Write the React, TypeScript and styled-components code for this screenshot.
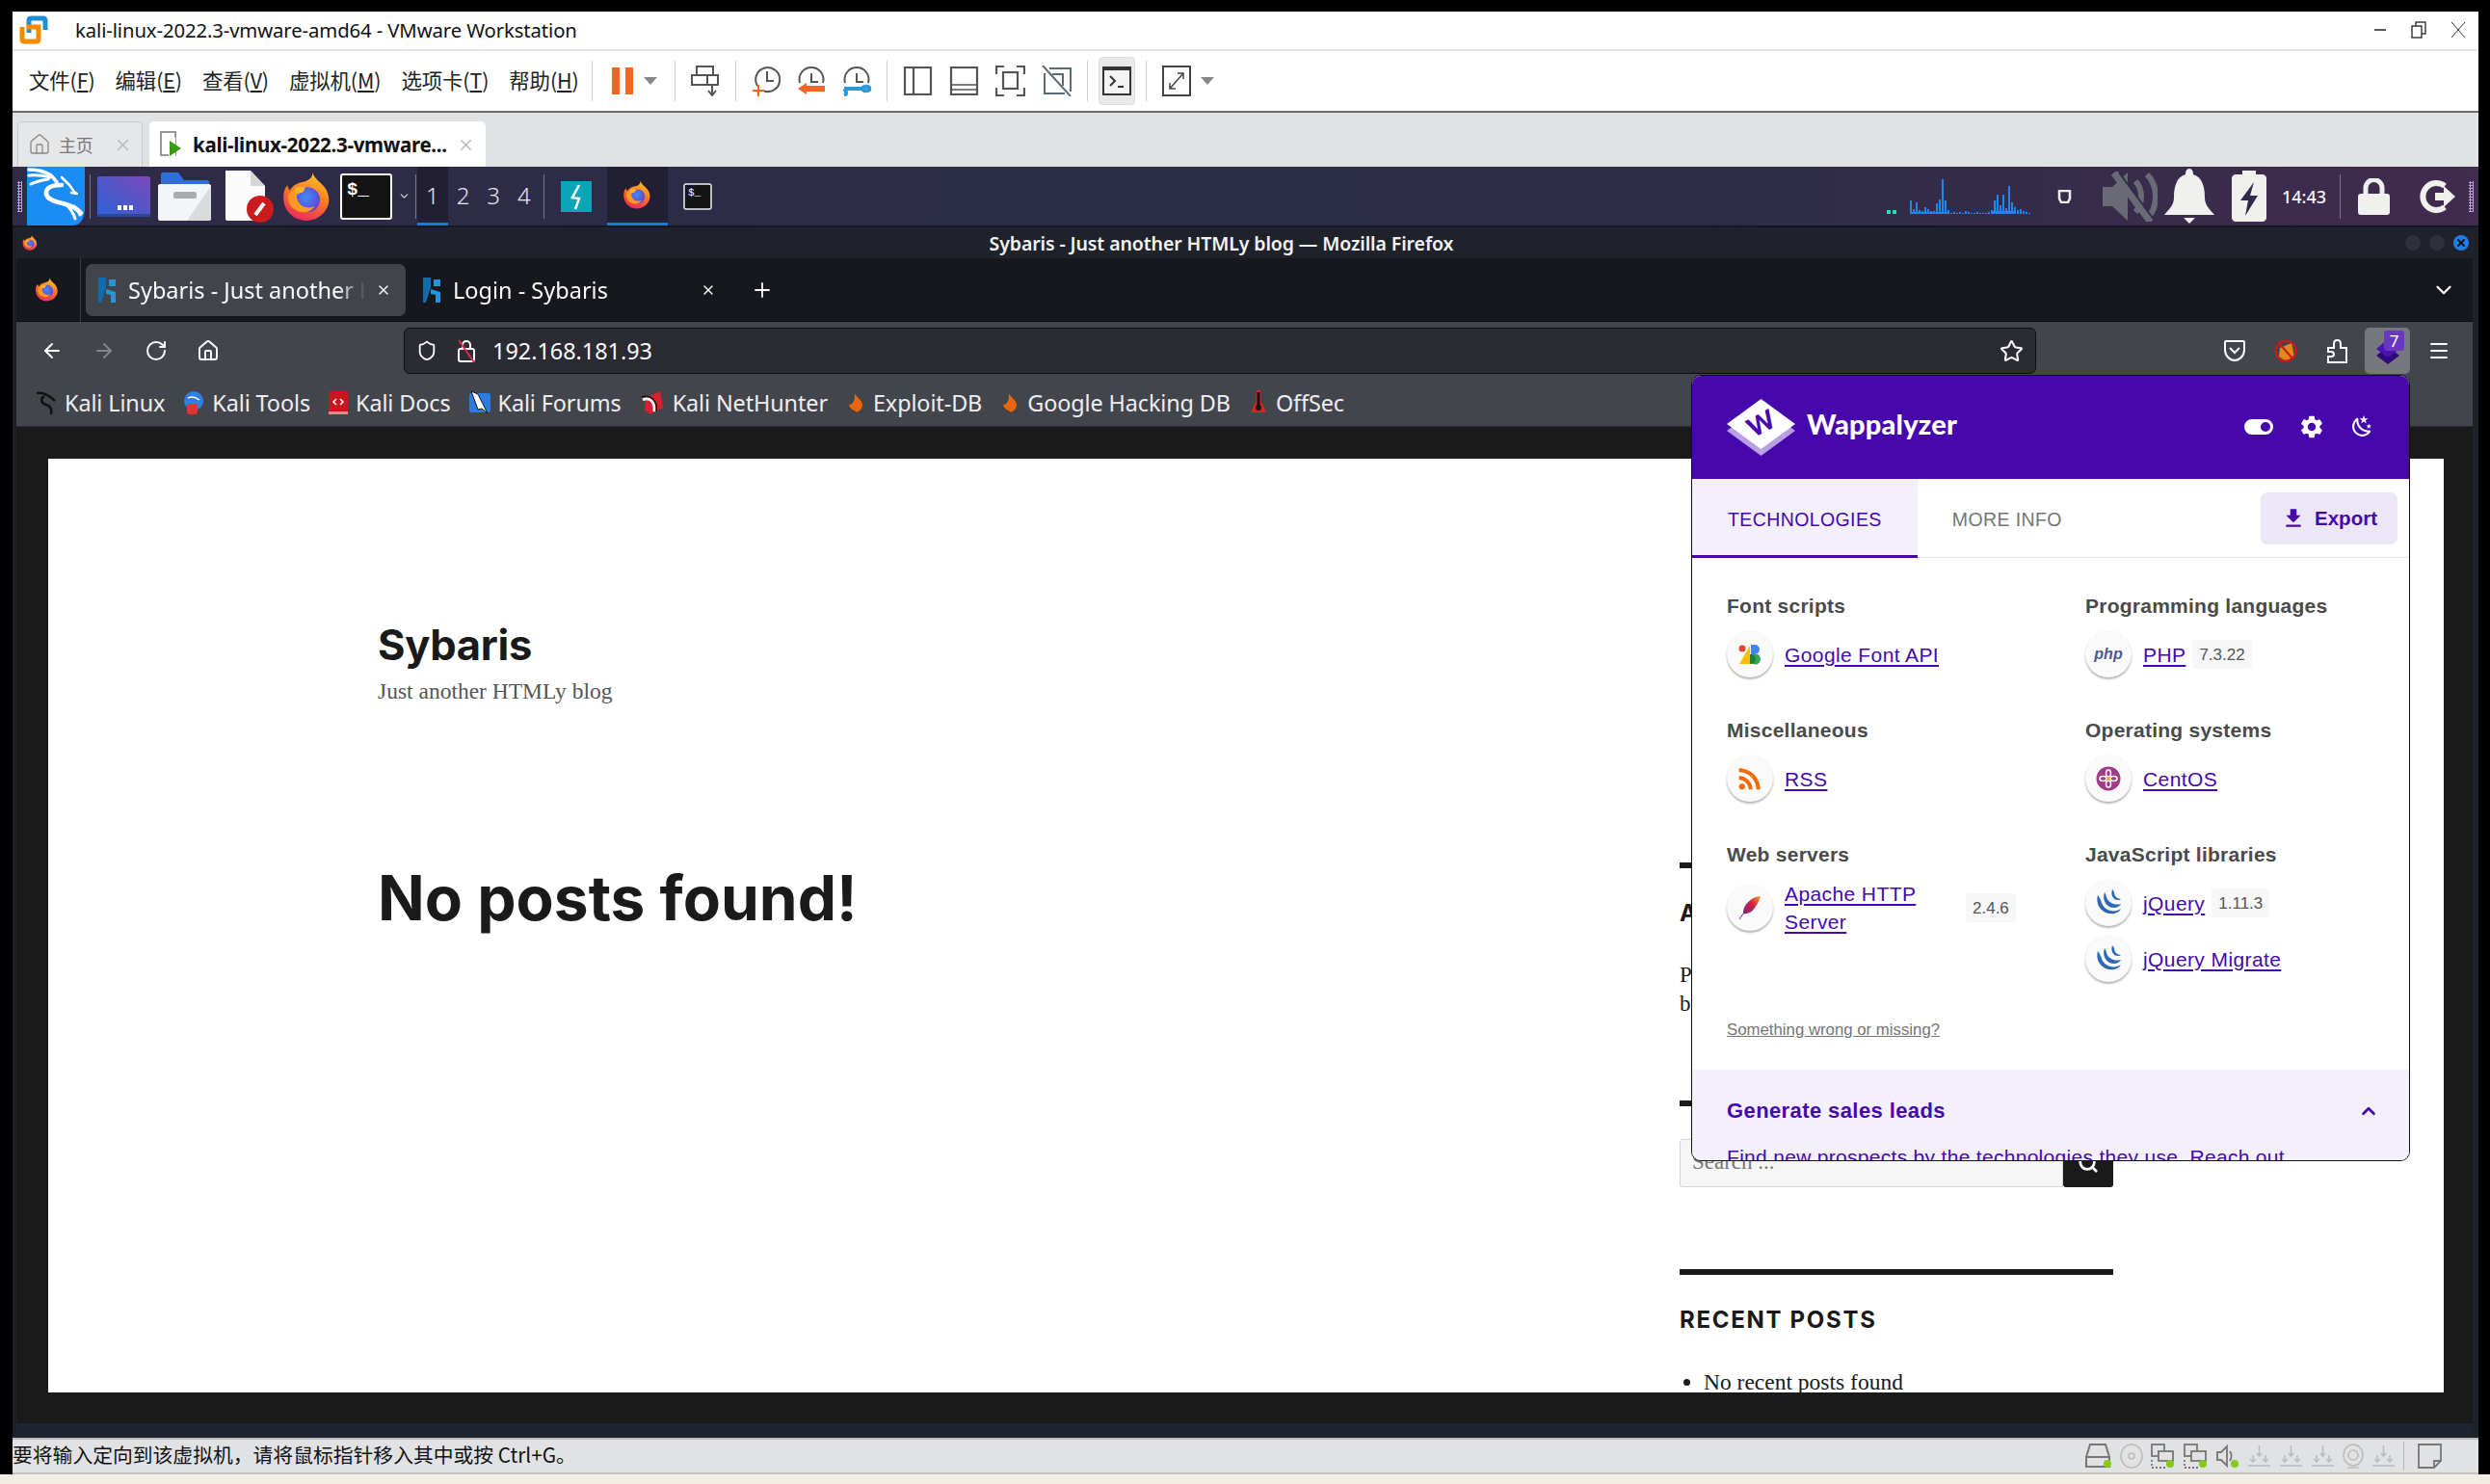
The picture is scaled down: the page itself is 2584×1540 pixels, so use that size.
import React from 'react';
import styled, { createGlobalStyle } from 'styled-components';
import { ArrowLeft, ArrowRight, RotateCw, Home, Shield, Star, Menu, Plus, X, ChevronDown, ChevronUp, Search } from 'lucide-react';
import { MdSettings, MdFileDownload, MdRssFeed } from 'react-icons/md';

const Global = createGlobalStyle`
  html, body { margin: 0; padding: 0; background: #000; }
  * { box-sizing: border-box; }
  a { color: inherit; }
`;

const Screen = styled.div`
  position: relative; width: 2584px; height: 1540px; background: #000; overflow: hidden;
  padding: 12px 12px 0 13px; display: flex; flex-direction: column;
  font-family: "Noto Sans", "Noto Sans CJK SC", sans-serif;
`;

/* ---------- VMware chrome ---------- */
const TitleBar = styled.div`
  height: 41px; flex: none; background: #fff; border-bottom: 2px solid #e6e6e6;
  display: flex; align-items: center; padding: 0 13px 2px 7px;
`;
const TitleText = styled.div`
  margin-left: 28px; font-size: 20.3px; letter-spacing: -0.1px; color: #111; flex: 1; white-space: nowrap;
`;
const WinButtons = styled.div`display: flex; align-items: center; gap: 25px;`;
const Toolbar = styled.div`
  height: 64px; flex: none; background: #fff; border-bottom: 2px solid #6b6b6b;
  display: flex; align-items: center; padding-left: 17px;
`;
const MenuList = styled.div`display: flex; gap: 21px; padding: 0 0 4px 0; width: 584px; flex: none;`;
const MenuItem = styled.span`
  font-family: "Noto Sans CJK SC", sans-serif; font-size: 21.4px; color: #222; white-space: nowrap;
  letter-spacing: -0.1px;
`;
const ToolGroup = styled.div`
  display: flex; align-items: center; gap: ${p => p.$gap ?? 17}px; height: 42px; padding: 0 ${p => p.$pad ?? 16}px;
  border-left: 1px solid #cfcfcf; flex: none;
`;
const ActiveTool = styled.div`
  width: 38px; height: 50px; margin: 0 -5px; background: #e9e9e9; border: 1px solid #dcdcdc; border-radius: 4px;
  display: flex; align-items: center; justify-content: center;
`;
const TabStrip = styled.div`
  height: 56px; flex: none; background: #e1e2e4; display: flex; align-items: flex-end; padding-left: 5px; gap: 7px;
`;
const VmTab = styled.div`
  height: 47px; width: ${p => p.$w}px; background: ${p => (p.$active ? '#fff' : '#e6e7e9')};
  border: 1px solid ${p => (p.$active ? '#fff' : '#c9cacc')}; border-bottom: 0; border-radius: 5px 5px 0 0;
  display: flex; align-items: center; padding: 0 10px; gap: 8px; white-space: nowrap;
`;
const VmTabLabel = styled.span`
  font-size: ${p => (p.$active ? 20.5 : 18)}px; font-weight: ${p => (p.$active ? 700 : 400)};
  color: ${p => (p.$active ? '#111' : '#777')}; flex: 1; letter-spacing: -0.3px;
  font-family: "Noto Sans", "Noto Sans CJK SC", sans-serif;
`;
const StatusBar = styled.div`
  height: 38px; flex: none; background: #e1e2e4; border-top: 2px solid #b9bcc0; border-bottom: 2px solid #c4c2bc;
  display: flex; align-items: center; justify-content: space-between; padding: 0 38px 0 0;
`;
const StatusText = styled.div`
  font-family: "Noto Sans CJK SC", sans-serif; font-size: 20.8px; color: #111; white-space: nowrap; padding-bottom: 4px;
`;
const StatusIcons = styled.div`display: flex; align-items: center; gap: 8px;`;
const StatusDivider = styled.div`width: 1px; height: 30px; background: #b5b5b5; margin: 0 6px 0 0;`;
const Beige = styled.div`height: 10px; flex: none; background: #f2eee6; margin: 0 -12px 0 -13px;`;

/* ---------- Kali panel ---------- */
const Panel = styled.div`
  height: 63px; flex: none; display: flex; align-items: center; padding: 0 5px; position: relative;
  background: linear-gradient(90deg, #2f2a47 0%, #2b2d48 45%, #2d2c48 70%, #412b4e 100%);
  border-bottom: 2px solid #16161e;
`;
const Grip = styled.div`
  width: 5px; height: 32px; flex: none;
  background-image: radial-gradient(#b9a2d6 1px, transparent 1.3px); background-size: 3px 3px;
`;
const PanelSep = styled.div`width: 1px; height: 46px; background: #77778a; flex: none;`;
const Workspace = styled.div`
  width: 31.7px; height: 61px; flex: none; display: flex; align-items: center; justify-content: center;
  font-size: 24px; font-weight: 300; color: #e8e8ee;
  background: ${p => (p.$active ? '#231f33' : 'transparent')};
  border-bottom: 3px solid ${p => (p.$active ? '#1f78e0' : 'transparent')};
`;
const TaskButton = styled.div`
  width: 63px; height: 61px; flex: none; display: flex; align-items: center; justify-content: center;
  background: #231f33; border-bottom: 3px solid #1f78e0;
`;
const Row = styled.div`display: flex; align-items: center; gap: ${p => p.$gap ?? 0}px; margin-left: ${p => p.$ml ?? 0}px; flex: none;`;
const Spacer = styled.div`flex: 1;`;
const Clock = styled.div`font-size: 18px; color: #f4f4f4; font-weight: 500; width: 54px; text-align: center;`;

/* ---------- Firefox ---------- */
const FirefoxWin = styled.div`
  flex: 1; min-height: 0; display: flex; flex-direction: column; background: #1f222b; padding: 0 6px 0 4px;
`;
const FfTitle = styled.div`
  height: 32px; flex: none; display: flex; align-items: center; margin: 0 -6px 0 -4px; padding: 0 10px;
  background: #1f222b;
`;
const FfTitleText = styled.div`
  flex: 1; text-align: center; color: #f3f3f3; font-weight: 600; font-size: 19.5px; letter-spacing: -0.1px;
`;
const WinDot = styled.span`
  width: 16px; height: 16px; border-radius: 50%; background: ${p => p.$c}; display: inline-flex;
  align-items: center; justify-content: center; flex: none;
`;
const TabBar = styled.div`
  height: 66px; flex: none; background: #17181d; display: flex; align-items: center; padding-left: 19px;
  color: #fbfbfe; border-bottom: 1px solid #0c0c0f;
`;
const TabSep = styled.div`width: 1px; height: 66px; background: #3a3b42; margin: 0 5px 0 22px;`;
const FfTab = styled.div`
  width: 332px; height: 54px; border-radius: 7px; background: ${p => (p.$active ? '#42444b' : 'transparent')};
  display: flex; align-items: center; padding: 0 ${p => (p.$active ? 15 : 10)}px 0 ${p => (p.$active ? 12 : 17)}px; gap: 10px;
`;
const FfTabLabel = styled.div`
  flex: 1; font-size: 23.5px; color: #fbfbfe; white-space: nowrap; overflow: hidden;
  mask-image: linear-gradient(90deg, #000 88%, transparent 100%);
`;
const NavBar = styled.div`
  height: 54px; flex: none; background: #43454c; display: flex; align-items: center; padding: 6px 0 0 25px; color: #fbfbfe;
`;
const NavIcons = styled.div`display: flex; align-items: center; gap: 30px; width: 377px; flex: none;`;
const UrlBar = styled.div`
  width: 1694px; height: 48px; flex: none; background: #2a2b33; border: 1px solid #0f0f12; border-radius: 6px;
  display: flex; align-items: center; padding: 0 12px 0 12px; gap: 16px;
`;
const UrlText = styled.div`font-size: 23.4px; color: #fbfbfe; flex: 1;`;
const NavRight = styled.div`flex: 1; display: flex; align-items: center; justify-content: flex-end; padding-right: 12px;`;
const NavTool = styled.div`
  position: relative; width: 47px; height: 48px; border-radius: 5px; flex: none; margin-left: 6px;
  background: ${p => (p.$active ? '#77787d' : 'transparent')}; display: flex; align-items: center; justify-content: center;
`;
const Badge = styled.span`
  position: absolute; top: 3px; right: 6px; width: 21px; height: 21px; background: #6a37c0; border-radius: 3px;
  color: #fff; font-size: 17px; line-height: 21px; text-align: center;
`;
const Bookmarks = styled.div`
  height: 55px; flex: none; background: #43454c; border-bottom: 1px solid #2a2b30; display: flex; align-items: center;
  padding: 6px 0 0 20px; gap: 19px;
`;
const Bookmark = styled.div`
  display: flex; align-items: center; gap: 8px; font-size: 23.4px; color: #eeeef2; white-space: nowrap; letter-spacing: -0.1px;
`;
const Content = styled.div`flex: 1; min-height: 0; background: #1a1a1a; padding: 33px 30px 31px 33px;`;
const FfFooter = styled.div`height: 16px; flex: none; background: #1e2530; border-top: 1px solid #15171c;`;

/* ---------- web page ---------- */
const WebPage = styled.div`height: 100%; background: #fff; overflow: hidden; display: flex;`;
const Main = styled.div`flex: 1; padding: 168px 0 0 342px;`;
const SiteName = styled.h1`
  margin: 0; font-family: Inter, sans-serif; font-weight: 700; font-size: 43.5px; line-height: 50px; color: #1a1a1a;
  letter-spacing: -0.3px;
`;
const Tagline = styled.p`
  margin: 9px 0 0; font-family: "Liberation Serif", serif; font-size: 23.5px; line-height: 28px; color: #555;
`;
const NoPosts = styled.h2`
  margin: 163px 0 0; font-family: Inter, sans-serif; font-weight: 700; font-size: 64px; line-height: 76px; color: #1a1a1a;
`;
const Aside = styled.aside`width: 450px; flex: none; margin-right: 343px; padding-top: 419px;`;
const Widget = styled.section`border-top: 6px solid #1a1a1a; padding-top: ${p => p.$pt ?? 32}px; margin-bottom: 85px;`;
const WidgetTitle = styled.h3`
  margin: 0 0 34px; font-family: Inter, sans-serif; font-weight: 700; font-size: 24px; line-height: 30px;
  letter-spacing: 1.7px; color: #1a1a1a;
`;
const WidgetText = styled.p`
  margin: 0; font-family: "Liberation Serif", serif; font-size: 23px; line-height: 30px; color: #1a1a1a; overflow: hidden; height: 60px;
  width: 40px;
`;
const SearchForm = styled.div`display: flex; height: 50px;`;
const SearchInput = styled.div`
  flex: 1; background: #f6f6f6; border: 1px solid #d4d4d4; border-radius: 3px 0 0 3px; padding: 0 12px;
  font-family: "Liberation Serif", serif; font-size: 23px; line-height: 46px; color: #777;
`;
const SearchBtn = styled.div`
  width: 52px; background: #1a1a1a; color: #fff; display: flex; align-items: center; justify-content: center; border-radius: 0 0 3px 3px;
`;
const PostList = styled.ul`
  margin: 0; padding: 0 0 0 25px; font-family: "Liberation Serif", serif; font-size: 23.5px; line-height: 30px; color: #1a1a1a;
`;

/* ---------- Wappalyzer popup ---------- */
const Popup = styled.div`
  position: absolute; left: 1755px; top: 389px; width: 746px; height: 816px; background: #fff; border: 1px solid #111;
  border-radius: 10px; overflow: hidden; display: flex; flex-direction: column; font-family: "Liberation Sans", sans-serif;
`;
const PopHeader = styled.div`
  height: 107px; flex: none; background: #4608ad; display: flex; align-items: center; padding: 0 36px 0 36px; color: #fff;
`;
const Brand = styled.div`
  margin-left: 12px; font-family: Lato, sans-serif; font-weight: 900; font-size: 29px; flex: 1; padding-bottom: 9px; letter-spacing: 0.2px;
`;
const HeadIcons = styled.div`display: flex; align-items: center; gap: 26px; padding-bottom: 2px;`;
const PopTabs = styled.div`
  height: 82px; flex: none; display: flex; align-items: center; border-bottom: 1px solid #e6e6e6; padding-right: 12px;
`;
const PopTab = styled.div`
  height: 82px; padding: 5px ${p => (p.$active ? 37 : 36)}px 0; margin-bottom: -1px; display: flex; align-items: center; font-size: 19.5px; letter-spacing: 0.4px;
  color: ${p => (p.$active ? '#4608ad' : '#757575')};
  background: ${p => (p.$active ? '#f3f0fb' : 'transparent')};
  border-bottom: 3px solid ${p => (p.$active ? '#4608ad' : 'transparent')};
`;
const ExportBtn = styled.div`
  margin-left: auto; width: 142px; height: 54px; background: #ece7f7; border-radius: 7px; color: #4608ad;
  display: flex; align-items: center; justify-content: center; gap: 9px; font-weight: 700; font-size: 20.5px;
`;
const PopBody = styled.div`padding: 35px 36px 28px; flex: none;`;
const CatGrid = styled.div`display: grid; grid-template-columns: 372px 1fr; row-gap: 40px;`;
const CatTitle = styled.div`font-size: 21px; line-height: 30px; font-weight: 700; color: #4a4a4a; margin-bottom: 11px; letter-spacing: 0.25px;`;
const Tech = styled.div`display: flex; align-items: center; & + & { margin-top: 10px; }`;
const TechIcon = styled.div`
  width: 48px; height: 48px; border-radius: 50%; background: #fafafa; flex: none; margin-right: 12px;
  box-shadow: 0 2px 2px rgba(0,0,0,.28), 0 0 2px rgba(0,0,0,.08);
  display: flex; align-items: center; justify-content: center;
`;
const TechLink = styled.a`
  font-size: 21px; line-height: 29px; letter-spacing: 0.4px; color: #4608ad; text-decoration: underline; text-underline-offset: 3px;
  ${p => (p.$w ? `width: ${p.$w}px;` : '')}
`;
const Version = styled.span`
  margin-left: 7px; background: #f7f7f7; border-radius: 4px; padding: 0 7px; height: 30px; line-height: 32px; font-size: 17px; color: #555; flex: none;
`;
const Wrong = styled.a`
  display: block; margin-top: 37px; font-size: 16.8px; line-height: 26px; color: #757575; text-decoration: underline;
`;
const Leads = styled.div`flex: 1; background: #f3f0fb; padding: 28px 31px 0 36px; color: #4608ad;`;
const LeadsHead = styled.div`display: flex; align-items: center; justify-content: space-between;`;
const LeadsTitle = styled.div`font-size: 22px; line-height: 30px; font-weight: 700; letter-spacing: 0.4px;`;
const LeadsText = styled.div`margin-top: 18px; font-size: 21px; line-height: 30px; letter-spacing: 0.3px; text-decoration: underline; white-space: nowrap;`;
const PhpMark = styled.span`font: italic 700 16px "Liberation Sans", sans-serif; color: #4f5b93;`;

/* ---------- drawings ---------- */
let uid = 0;
const Firefox = ({ s }: { s: number }) => {
  const id = React.useMemo(() => `ff${uid++}`, []);
  return (
    <svg width={s} height={s} viewBox="0 0 48 48">
      <defs>
        <linearGradient id={id} x1="0.7" y1="0" x2="0.3" y2="1">
          <stop offset="0" stopColor="#ffc527" /><stop offset=".45" stopColor="#ff7a24" /><stop offset="1" stopColor="#e8285c" />
        </linearGradient>
        <radialGradient id={id + 'b'} cx=".45" cy=".4" r=".7">
          <stop offset="0" stopColor="#3f8dfa" /><stop offset="1" stopColor="#6a34cc" />
        </radialGradient>
      </defs>
      <path fill={`url(#${id})`} d="M30 1c1 6 8 9 12 15 4 6 5 14 1 20-4 7-11 11-19 11C11 47 2 37 2 25c0-5 1-9 4-12 0 2 1 4 2 5 3-5 8-7 13-8 5-1 9-4 9-9z" />
      <circle cx="25" cy="27" r="12" fill={`url(#${id}b)`} />
      <path fill="#ff9a1f" d="M7 21c3-3 7-5 11-4l4 2-7 3c-1 4 1 8 5 11 4 2 9 2 12 0-3 6-12 8-18 4C8 34 5 27 7 21z" />
      <path fill="#ffb22e" d="M13 16c3-2 7-2 10 0l-3 4-7 1z" />
    </svg>
  );
};
const KaliDragon = () => (
  <svg width="61" height="61" viewBox="0 0 61 61">
    <path fill="#1c8cf5" d="M1 0h60v44c0 8-4 17-12 17H1z" />
    <g fill="none" stroke="#fff" strokeLinecap="round" strokeLinejoin="round">
      <path strokeWidth="3.500" d="M3 3c8 0 17 2 23 6l6 7" />
      <path strokeWidth="3" d="M3 9c8-1 15 0 22 2M5 18c6-3 12-4 18-5" />
      <path strokeWidth="2.500" d="M37 11l8 8 5 7 3 2-6-1" />
      <path strokeWidth="4.500" d="M37 19c-7 0-15 1-16 7-1 6 5 9 13 11 9 2 18 5 23 11" />
      <path strokeWidth="3" d="M40 38c5 4 9 9 11 16M50 41c3 3 5 6 6 9" />
    </g>
  </svg>
);
const VmLogo = () => (
  <svg width="30" height="30" viewBox="0 0 30 30" fill="none" strokeWidth="5">
    <path stroke="#1c8fd6" d="M10 18V5.500C10 4 11 3 12.500 3h12C26 3 27 4 27 5.500V15" />
    <path stroke="#f38b00" d="M3 12v12.500C3 26 4 27 5.500 27h12c1.500 0 2.500-1 2.500-2.500V12H8" />
  </svg>
);
const TriDown = () => (
  <svg width="14" height="8" viewBox="0 0 14 8"><path d="M0 0h14L7 8z" fill="#888" /></svg>
);
const Dome = ({ children }: { children?: React.ReactNode }) => (
  <svg width="30" height="32" viewBox="0 0 30 32" fill="none" stroke="#555" strokeWidth="2">
    <path d="M3 18a12.500 12.500 0 1 1 24 0" /><path d="M15 8v9h7" />
    {children}
  </svg>
);
const FeatherIcon = () => (
  <svg width="28" height="30" viewBox="0 0 28 30">
    <defs>
      <linearGradient id="apf" x1="1" y1="0" x2="0" y2="1">
        <stop offset="0" stopColor="#f7a52c" /><stop offset=".45" stopColor="#d3203f" /><stop offset="1" stopColor="#7c2a80" />
      </linearGradient>
    </defs>
    <path fill="url(#apf)" d="M25 3C19 3 13 7 9 13c-2 3-2 6-2 8 4 1 9-1 12-6 3-4 5-8 6-12z" />
    <path stroke="#7c2a80" strokeWidth="1" d="M10 17L3 27" />
  </svg>
);
const JQuery = () => (
  <svg width="28" height="30" viewBox="0 0 28 30" fill="#2b69b4">
    <path d="M3 7C0 17 8 28 20 26c4-1 6-3 7-5-7 5-17 2-20-6-1-3-2-6-4-8z" />
    <path d="M10 4C7 12 12 20 20 20c3 0 6-2 7-4-6 2-13-1-15-7-.5-2-1-4-2-5z" />
    <path d="M18 1c-2 6 1 11 6 11 1 0 2 0 3-1-4 0-7-3-7-7-.5-1-1-2-2-3z" />
  </svg>
);
const UsbTray = () => (
  <svg width="25" height="26" viewBox="0 0 25 26" fill="none" stroke="#b9bbbe" strokeWidth="1.500">
    <path d="M1 23h23M6 12v7M3 16l3 3 3-3M12.500 2v11M10 10l2.500 3 2.500-3M19 12v7M16 16l3 3 3-3" />
  </svg>
);
const Dot = ({ x, y }: { x: number; y: number }) => <circle cx={x} cy={y} r="4" fill="#84c91c" stroke="none" />;
const bars = [14,5,12,4,3,7,5,3,3,11,15,36,14,4,1,2,1,2,1,3,2,1,1,2,1,1,1,2,4,14,20,9,20,6,29,12,7,4,5,3,2,1];
const Graph = () => (
  <svg width="154" height="36" viewBox="0 0 154 36">
    <rect x="0" y="32" width="4" height="4" fill="#19e6b8" /><rect x="6" y="32" width="4" height="4" fill="#19e6b8" />
    {bars.map((h, i) => <rect key={i} x={24 + i * 3} y={36 - h} width="2" height={h} fill="#1f86f0" />)}
    <rect x="24" y="34" width="40" height="2" fill="#1f86f0" /><rect x="110" y="33" width="22" height="3" fill="#1f86f0" />
  </svg>
);
const SybFav = () => (
  <svg width="22" height="26" viewBox="0 0 22 26">
    <path fill="#0f6cb0" d="M1 0h8v10L4 26H1z" /><path fill="#2a93d8" d="M12 2h7v7h-7zM9 12l10 3v11h-5v-8l-5-1z" />
  </svg>
);
const BmIcon = ({ kind }: { kind: string }) => {
  if (kind === 'kali') return (
    <svg width="22" height="26" viewBox="0 0 22 26" fill="none" stroke="#111" strokeWidth="2.500">
      <path d="M1 3c8-1 14 3 19 8M9 6C4 9 6 14 11 15c4 1 6 4 5 10" />
    </svg>
  );
  if (kind === 'tools') return (
    <svg width="22" height="26" viewBox="0 0 22 26"><circle cx="11" cy="11" r="10" fill="#2f7fe6" /><rect x="4" y="14" width="11" height="11" rx="2" fill="#e0342e" /><path stroke="#fff" strokeWidth="1.500" fill="none" d="M5 8c4-2 8-1 12 2" /></svg>
  );
  if (kind === 'docs') return (
    <svg width="20" height="26" viewBox="0 0 20 26"><rect width="20" height="24" y="1" rx="2" fill="#c8161d" /><rect y="22" width="20" height="3" fill="#e88" /><path stroke="#fff" strokeWidth="1.500" fill="none" d="M8 9l-3 3 3 3M12 9l3 3-3 3" /></svg>
  );
  if (kind === 'forums') return (
    <svg width="22" height="26" viewBox="0 0 22 26"><rect y="3" width="22" height="20" rx="2" fill="#2b7be0" /><path fill="#fff" stroke="#111" strokeWidth="1" d="M2 1l7 3 10 20-6-5-4 1z" /></svg>
  );
  if (kind === 'hunter') return (
    <svg width="26" height="26" viewBox="0 0 26 26"><path fill="#d8202e" d="M6 8L21 1l3 17-13 7-6-4z" /><path fill="none" stroke="#fff" strokeWidth="3" d="M3 10c7-4 13 2 12 12" /><path fill="none" stroke="#111" strokeWidth="1.500" d="M2 7c9-3 17 4 15 15" /></svg>
  );
  if (kind === 'flame') return (
    <svg width="20" height="26" viewBox="0 0 20 26"><path fill="#e8660c" d="M9 3c1 4 8 7 8 12s-4 7-6 8c-1-2-7-3-8-8 2 0 3-1 4-2 2-3 2-6 2-10z" /></svg>
  );
  return (
    <svg width="20" height="28" viewBox="0 0 20 28"><path fill="#e02026" d="M8 1h4l1 12 5 11H2l5-11z" /><circle cx="10" cy="19" r="3" fill="#111" /><rect x="8.500" y="3" width="3" height="14" fill="#111" /></svg>
  );
};

const WapLogo = () => (
  <svg width="71" height="59" viewBox="0 0 71 59">
    <path fill="#b9a0e2" d="M35.500 7L71 33 35.500 59 0 33z" />
    <path fill="#fff" d="M35.500 0L71 26 35.500 52 0 26z" />
    <text x="36" y="35" fontFamily="Lato, sans-serif" fontWeight="900" fontSize="27" fill="#4608ad" textAnchor="middle" transform="rotate(-28 36 26)">W</text>
  </svg>
);
const Moon = () => (
  <svg width="25" height="25" viewBox="0 0 24 24" fill="#fff">
    <path d="M17.750,4.090L15.220,6.030L16.130,9.090L13.500,7.280L10.870,9.090L11.780,6.030L9.250,4.090L12.440,4L13.500,1L14.560,4L17.750,4.090M21.250,11L19.610,12.250L20.200,14.230L18.500,13.060L16.800,14.230L17.390,12.250L15.750,11L17.810,10.950L18.500,9L19.190,10.950L21.250,11M18.970,15.950C19.800,15.870 20.690,17.050 20.160,17.800C19.840,18.250 19.500,18.670 19.080,19.070C15.170,23 8.840,23 4.940,19.070C1.030,15.170 1.030,8.830 4.940,4.930C5.340,4.530 5.760,4.170 6.210,3.850C6.960,3.320 8.140,4.210 8.060,5.040C7.790,7.900 8.750,10.870 10.950,13.060C13.140,15.260 16.100,16.220 18.970,15.950M17.330,17.970C14.500,17.810 11.700,16.640 9.530,14.500C7.360,12.310 6.200,9.500 6.040,6.680C3.230,9.820 3.340,14.640 6.350,17.660C9.370,20.670 14.190,20.780 17.330,17.970Z" />
  </svg>
);

const bookmarks: [string, string][] = [
  ['kali', 'Kali Linux'], ['tools', 'Kali Tools'], ['docs', 'Kali Docs'], ['forums', 'Kali Forums'],
  ['hunter', 'Kali NetHunter'], ['flame', 'Exploit-DB'], ['flame', 'Google Hacking DB'], ['off', 'OffSec'],
];

export default function App() {
  return (
    <Screen>
      <Global />
      <TitleBar>
        <VmLogo />
        <TitleText>kali-linux-2022.3-vmware-amd64 - VMware Workstation</TitleText>
        <WinButtons>
          <svg width="14" height="14" viewBox="0 0 14 14"><path d="M1 7h12" stroke="#222" strokeWidth="1.500" /></svg>
          <svg width="16" height="18" viewBox="0 0 16 18" fill="#fff" stroke="#222" strokeWidth="1.300"><rect x="5" y="1" width="10" height="12" /><rect x="1" y="5" width="10" height="12" /></svg>
          <svg width="16" height="18" viewBox="0 0 16 18"><path d="M1 1l14 16M15 1L1 17" stroke="#333" strokeWidth="1" /></svg>
        </WinButtons>
      </TitleBar>

      <Toolbar>
        <MenuList>
          <MenuItem>文件(<u>F</u>)</MenuItem>
          <MenuItem>编辑(<u>E</u>)</MenuItem>
          <MenuItem>查看(<u>V</u>)</MenuItem>
          <MenuItem>虚拟机(<u>M</u>)</MenuItem>
          <MenuItem>选项卡(<u>T</u>)</MenuItem>
          <MenuItem>帮助(<u>H</u>)</MenuItem>
        </MenuList>
        <ToolGroup $gap={11} $pad={18}>
          <svg width="24" height="30" viewBox="0 0 24 30"><rect x="2" width="8" height="28" y="1" fill="#f26522" /><rect x="16" width="8" height="28" y="1" fill="#f26522" /></svg>
          <TriDown />
        </ToolGroup>
        <ToolGroup>
          <svg width="30" height="32" viewBox="0 0 30 32" fill="none" stroke="#555" strokeWidth="2">
            <rect x="6" y="1" width="17" height="9" /><rect x="1" y="10" width="27" height="10" /><path d="M17 10v10M22 20v10M18 26l4 5 4-5" />
          </svg>
        </ToolGroup>
        <ToolGroup>
          <svg width="30" height="32" viewBox="0 0 30 32" fill="none" stroke="#555" strokeWidth="2">
            <path d="M6 21a12.500 12.500 0 1 1 7 5.500" /><path d="M16 6v10h7" /><path d="M1 26h12M7 20v12" stroke="#f26522" strokeWidth="2.200" />
          </svg>
          <Dome><path d="M1 24l9-6v3h19v6H10v3z" fill="#f26522" stroke="none" /></Dome>
          <Dome><path d="M2 24h18c3-3 7-3 9 0-2 3-6 3-9 0M2 24c3 3 3 6 0 7" stroke="#2a9ad8" strokeWidth="4" /></Dome>
        </ToolGroup>
        <ToolGroup>
          <svg width="31" height="30" viewBox="0 0 31 30" fill="none" stroke="#555" strokeWidth="2.200"><rect x="2" y="1" width="27" height="28" /><path d="M11 1v28" /></svg>
          <svg width="31" height="30" viewBox="0 0 31 30" fill="none" stroke="#555" strokeWidth="2.200"><rect x="2" y="1" width="27" height="28" /><path d="M2 19h27M2 24h27" strokeWidth="1.500" /></svg>
          <svg width="31" height="32" viewBox="0 0 31 32" fill="none" stroke="#555" strokeWidth="2.200"><path d="M1 9V1h8M22 1h8v8M30 23v8h-8M9 31H1v-8" /><rect x="8" y="7" width="15" height="17" /></svg>
          <svg width="31" height="32" viewBox="0 0 31 32" fill="none" stroke="#5a6b78" strokeWidth="2"><path d="M8 3h22v24M24 29H3V8M1 0l29 32M11 9h11v12" /></svg>
        </ToolGroup>
        <ToolGroup>
          <ActiveTool>
            <svg width="30" height="30" viewBox="0 0 30 30" fill="none" stroke="#333" strokeWidth="2"><rect x="1" y="1" width="28" height="28" fill="#f4f4f4" /><path d="M1 3h28M8 10l5 5-5 5M16 21h6" /></svg>
          </ActiveTool>
        </ToolGroup>
        <ToolGroup $gap={10}>
          <svg width="30" height="32" viewBox="0 0 30 32" fill="none" stroke="#444" strokeWidth="2"><rect x="1" y="1" width="28" height="30" /><path d="M8 24L22 8M16 8h6v6M8 18v6h6" strokeWidth="1.500" /></svg>
          <TriDown />
        </ToolGroup>
      </Toolbar>

      <TabStrip>
        <VmTab $w={130}>
          <Home size={24} color="#888" strokeWidth={1.300} />
          <VmTabLabel>主页</VmTabLabel>
          <X size={19} color="#bbb" strokeWidth={2} />
        </VmTab>
        <VmTab $w={349} $active>
          <svg width="26" height="30" viewBox="0 0 26 30" fill="none"><rect x="1" y="2" width="15" height="24" stroke="#777" strokeWidth="1.500" /><path fill="#fff" d="M9 8h7v20H9z" /><path fill="#3a9a12" d="M10 11l12 8-12 8z" /></svg>
          <VmTabLabel $active>kali-linux-2022.3-vmware...</VmTabLabel>
          <X size={19} color="#bbb" strokeWidth={2} />
        </VmTab>
      </TabStrip>

      <Panel>
        <Grip />
        <Row $ml={4}><KaliDragon /></Row>
        <Row $ml={5}><PanelSep /></Row>
        <Row $ml={7}>
          <svg width="55" height="42" viewBox="0 0 55 42">
            <defs><linearGradient id="tile" x1="0" y1="1" x2="1" y2="0"><stop offset="0" stopColor="#2b63d9" /><stop offset="1" stopColor="#7b49b8" /></linearGradient></defs>
            <rect width="55" height="42" rx="2" fill="url(#tile)" />
            <rect y="39" width="55" height="3" fill="#2c4a9a" />
            <rect x="21" y="30" width="4" height="5" fill="#fff" /><rect x="27" y="30" width="4" height="5" fill="#fff" /><rect x="33" y="30" width="4" height="5" fill="#fff" />
          </svg>
        </Row>
        <Row $ml={8}>
          <svg width="55" height="50" viewBox="0 0 55 50">
            <path fill="#2f6fd8" d="M3 14V2c0-1 1-2 2-2h16l6 8h24c1 0 2 1 2 2v6H3z" />
            <path fill="#f4f5f6" d="M0 14c0-1 1-2 2-2h51c1 0 2 1 2 2v34c0 1-1 2-2 2H2c-1 0-2-1-2-2z" />
            <path fill="#d9dbdd" d="M55 14L30 50h23c1 0 2-1 2-2z" />
            <rect x="16" y="20" width="24" height="7" rx="2" fill="#a9abae" />
          </svg>
        </Row>
        <Row $ml={15}>
          <svg width="50" height="56" viewBox="0 0 50 56">
            <path fill="#fbfbfb" d="M0 1h26l15 16v36H2c-1 0-2-1-2-2z" />
            <path fill="#d5d5d5" d="M26 1l15 16H26z" />
            <circle cx="36" cy="41" r="14" fill="#cc1a1f" />
            <path stroke="#fff" strokeWidth="4" d="M31 47l9-12" />
          </svg>
        </Row>
        <Row $ml={8}><Firefox s={52} /></Row>
        <Row $ml={9}>
          <svg width="54" height="48" viewBox="0 0 54 48">
            <rect x="1" y="1" width="52" height="46" rx="2" fill="#141414" stroke="#fff" strokeWidth="2" />
            <text x="7" y="22" fill="#fff" fontFamily="Liberation Mono, monospace" fontWeight="700" fontSize="19">$_</text>
          </svg>
        </Row>
        <Row $ml={6}><ChevronDown size={13} color="#ccc" strokeWidth={2.500} /></Row>
        <Row $ml={5}><PanelSep /></Row>
        <Row $ml={1}>
          <Workspace $active>1</Workspace><Workspace>2</Workspace><Workspace>3</Workspace><Workspace>4</Workspace>
        </Row>
        <Row $ml={4}><PanelSep /></Row>
        <Row $ml={17}>
          <svg width="32" height="32" viewBox="0 0 32 32"><rect width="32" height="32" fill="#0aa6b8" /><path fill="none" stroke="#fff" strokeWidth="2.500" d="M19 4l-7 13 7 1-4 11" /></svg>
        </Row>
        <Row $ml={16}><TaskButton><Firefox s={30} /></TaskButton></Row>
        <Row $ml={16}>
          <svg width="30" height="28" viewBox="0 0 30 28"><rect x="1" y="1" width="28" height="26" rx="2" fill="#141414" stroke="#eee" strokeWidth="1.500" /><text x="5" y="13" fill="#fff" fontFamily="Liberation Mono, monospace" fontSize="11">$_</text></svg>
        </Row>
        <Spacer />
        <Row><Graph /></Row>
        <Row $ml={23}><svg width="15" height="14" viewBox="0 0 15 14"><path fill="none" stroke="#eee" strokeWidth="2.500" d="M2 1h11v8l-2 4H4L2 9z" /></svg></Row>
        <Row $ml={32}>
          <svg width="57" height="52" viewBox="0 0 57 52" fill="#6a6a76">
            <path d="M0 16h10L26 1v50L10 36H0z" /><path fill="none" stroke="#6a6a76" strokeWidth="6" d="M34 10c8 8 8 24 0 32M46 3c12 12 12 34 0 46" /><path stroke="#6a6a76" strokeWidth="8" d="M12 1l38 51" />
            <path stroke="#2f2c48" strokeWidth="2" d="M17 1l37 50" />
          </svg>
        </Row>
        <Row $ml={7}>
          <svg width="52" height="57" viewBox="0 0 52 57" fill="#f0f0ee"><path d="M26 0c3 0 4 3 4 6 10 3 12 14 12 24 0 8 5 12 10 18H0c5-6 10-10 10-18C10 20 12 9 22 6c0-3 1-6 4-6z" /><path d="M20 51h12l-6 6z" /></svg>
        </Row>
        <Row $ml={18}>
          <svg width="36" height="53" viewBox="0 0 36 53"><path fill="#f0f0ee" d="M11 0h14v4h7c2 0 4 2 4 4v41c0 2-2 4-4 4H4c-2 0-4-2-4-4V8c0-2 2-4 4-4h7z" /><path fill="#2d2b48" d="M23 12L9 31h8l-3 16 13-21h-8z" /></svg>
        </Row>
        <Row $ml={12}><Clock>14:43</Clock></Row>
        <Row $ml={10}><PanelSep /></Row>
        <Row $ml={18}>
          <svg width="33" height="38" viewBox="0 0 33 38"><path fill="none" stroke="#f0f0ee" strokeWidth="5" d="M8 18V10a8.500 8.500 0 0 1 17 0v8" /><rect y="16" width="33" height="22" rx="3" fill="#f0f0ee" /></svg>
        </Row>
        <Row $ml={30}>
          <svg width="38" height="36" viewBox="0 0 38 36" fill="none" stroke="#f0f0ee" strokeWidth="6"><path d="M27 7a14 14 0 1 0 0 22" /><path fill="#f0f0ee" stroke="none" d="M17 14h9V7l12 11-12 11v-7h-9z" /></svg>
        </Row>
        <Row $ml={14}><Grip /></Row>
      </Panel>

      <FirefoxWin>
        <FfTitle>
          <Firefox s={16} />
          <FfTitleText>Sybaris - Just another HTMLy blog — Mozilla Firefox</FfTitleText>
          <Row $gap={9}>
            <WinDot $c="#2e313b" /><WinDot $c="#2e313b" />
            <WinDot $c="#1c7fe8"><X size={12} color="#10131a" strokeWidth={4} /></WinDot>
          </Row>
        </FfTitle>
        <TabBar>
          <Firefox s={25} />
          <TabSep />
          <FfTab $active>
            <SybFav />
            <FfTabLabel>Sybaris - Just another HTMLy blog</FfTabLabel>
            <X size={16} color="#fbfbfe" strokeWidth={2} />
          </FfTab>
          <FfTab>
            <SybFav />
            <FfTabLabel>Login - Sybaris</FfTabLabel>
            <X size={16} color="#fbfbfe" strokeWidth={2} />
          </FfTab>
          <Row $ml={26}><Plus size={24} color="#fbfbfe" strokeWidth={1.800} /></Row>
          <Spacer />
          <Row style={{ marginRight: 17 }}><ChevronDown size={26} color="#fbfbfe" strokeWidth={2} /></Row>
        </TabBar>
        <NavBar>
          <NavIcons>
            <ArrowLeft size={24} strokeWidth={2} />
            <ArrowRight size={24} strokeWidth={2} color="#85868b" />
            <RotateCw size={24} strokeWidth={2} />
            <Home size={24} strokeWidth={2} />
          </NavIcons>
          <UrlBar>
            <Shield size={22} strokeWidth={2} color="#fbfbfe" />
            <Row $ml={3}>
              <svg width="22" height="26" viewBox="0 0 22 26" fill="none" stroke="#fbfbfe" strokeWidth="2"><rect x="3" y="11" width="16" height="13" rx="2" /><path d="M7 11V7a4 4 0 0 1 8 0v4" /><path stroke="#e22850" d="M3 2l16 23" /></svg>
            </Row>
            <UrlText>192.168.181.93</UrlText>
            <Star size={25} strokeWidth={2} color="#fbfbfe" />
          </UrlBar>
          <NavRight>
            <NavTool><svg width="22" height="24" viewBox="0 0 22 24" fill="none" stroke="#fbfbfe" strokeWidth="2"><path d="M2 2h18c1 0 1 1 1 1v8c0 6-5 11-10 11S1 17 1 11V3s0-1 1-1z" /><path d="M6 9l5 5 5-5" /></svg></NavTool>
            <NavTool>
              <svg width="24" height="26" viewBox="0 0 24 26"><path fill="#e08a1c" d="M6 10l12-5 3 14-9 5-7-5z" /><circle cx="12" cy="13" r="10.500" fill="none" stroke="#d01818" strokeWidth="2" /><path stroke="#d01818" strokeWidth="2" d="M5 5l14 16" /></svg>
            </NavTool>
            <NavTool><svg width="22" height="25" viewBox="0 0 22 25" fill="none" stroke="#fbfbfe" strokeWidth="2"><path d="M2 9h6V5c0-2 1-4 3.500-4S15 3 15 5v4h6v15H2v-6h3c2 0 3-1 3-2.500S7 13 5 13H2z" /></svg></NavTool>
            <NavTool $active>
              <svg width="26" height="30" viewBox="0 0 26 30"><path fill="#2c0a77" d="M13 10l12 10-12 9L1 20z" /><path fill="#4a11b5" d="M13 3l12 10-12 9L1 13z" /></svg>
              <Badge>7</Badge>
            </NavTool>
            <NavTool><Menu size={24} color="#fbfbfe" strokeWidth={2} /></NavTool>
          </NavRight>
        </NavBar>
        <Bookmarks>
          {bookmarks.map(([k, t]) => <Bookmark key={t}><BmIcon kind={k} />{t}</Bookmark>)}
        </Bookmarks>
        <Content>
          <WebPage>
            <Main>
              <SiteName>Sybaris</SiteName>
              <Tagline>Just another HTMLy blog</Tagline>
              <NoPosts>No posts found!</NoPosts>
            </Main>
            <Aside>
              <Widget>
                <WidgetTitle>ABOUT</WidgetTitle>
                <WidgetText>Powered by HTMLy</WidgetText>
              </Widget>
              <Widget $pt={34}>
                <SearchForm>
                  <SearchInput>Search ...</SearchInput>
                  <SearchBtn><Search size={22} color="#fff" strokeWidth={3} /></SearchBtn>
                </SearchForm>
              </Widget>
              <Widget>
                <WidgetTitle>RECENT POSTS</WidgetTitle>
                <PostList><li>No recent posts found</li></PostList>
              </Widget>
            </Aside>
          </WebPage>
        </Content>
        <FfFooter />
      </FirefoxWin>

      <StatusBar>
        <StatusText>要将输入定向到该虚拟机，请将鼠标指针移入其中或按 Ctrl+G。</StatusText>
        <StatusIcons>
          <svg width="28" height="26" viewBox="0 0 28 26" fill="none" stroke="#777" strokeWidth="2"><path d="M1 24V14L5 1h16l4 13v10zM1 14h24" /><Dot x={23} y={21} /></svg>
          <svg width="24" height="26" viewBox="0 0 24 26" fill="none" stroke="#bbb" strokeWidth="1.500"><ellipse cx="12" cy="13" rx="11" ry="12" /><circle cx="12" cy="13" r="3" /></svg>
          {[0, 1].map(i => (
            <svg key={i} width="26" height="26" viewBox="0 0 26 26" fill="none" stroke="#777" strokeWidth="1.800"><rect x="1" y="1" width="13" height="12" /><rect x="8" y="8" width="15" height="10" fill="#e1e2e4" /><path d="M1 25h14M1 17v8" strokeDasharray="2 2" /><Dot x={20} y={21} /></svg>
          ))}
          <svg width="24" height="26" viewBox="0 0 24 26" fill="none" stroke="#777" strokeWidth="1.800"><path d="M1 9h4l6-6v20l-6-6H1z" /><path d="M14 8c2 3 2 7 0 10" /><Dot x={19} y={21} /></svg>
          <UsbTray /><UsbTray /><UsbTray />
          <svg width="22" height="26" viewBox="0 0 22 26" fill="none" stroke="#bbb" strokeWidth="1.500"><ellipse cx="11" cy="12" rx="10" ry="11" /><circle cx="11" cy="12" r="5" /><path d="M5 25h12" /></svg>
          <UsbTray />
          <StatusDivider />
          <svg width="25" height="26" viewBox="0 0 25 26" fill="none" stroke="#777" strokeWidth="1.800"><path d="M1 1h23v17l-7 7H1zM24 18h-7v7" /></svg>
        </StatusIcons>
      </StatusBar>
      <Beige />

      <Popup>
        <PopHeader>
          <WapLogo />
          <Brand>Wappalyzer</Brand>
          <HeadIcons>
            <svg width="30" height="16" viewBox="0 0 30 16"><path fill="#fff" fillRule="evenodd" d="M8 0h14a8 8 0 0 1 0 16H8A8 8 0 0 1 8 0zm14 3a5 5 0 1 0 0 10 5 5 0 0 0 0-10z" /></svg>
            <MdSettings size={28} color="#fff" />
            <Moon />
          </HeadIcons>
        </PopHeader>
        <PopTabs>
          <PopTab $active>TECHNOLOGIES</PopTab>
          <PopTab>MORE INFO</PopTab>
          <ExportBtn><MdFileDownload size={26} color="#4608ad" />Export</ExportBtn>
        </PopTabs>
        <PopBody>
          <CatGrid>
            <div>
              <CatTitle>Font scripts</CatTitle>
              <Tech>
                <TechIcon>
                  <svg width="24" height="22" viewBox="0 0 24 22"><circle cx="4" cy="5" r="3.500" fill="#ea4335" /><path fill="#fbbc04" d="M1 21L12 2v19z" /><path fill="#4285f4" d="M13 1h4a5 5 0 0 1 0 10h-4z" /><circle cx="17.500" cy="16" r="5.500" fill="#34a853" /><path fill="#1e7e3c" d="M12 11h1a5 5 0 0 1 0 10h-1z" /></svg>
                </TechIcon>
                <TechLink>Google Font API</TechLink>
              </Tech>
            </div>
            <div>
              <CatTitle>Programming languages</CatTitle>
              <Tech>
                <TechIcon><PhpMark>php</PhpMark></TechIcon>
                <TechLink>PHP</TechLink><Version>7.3.22</Version>
              </Tech>
            </div>
            <div>
              <CatTitle>Miscellaneous</CatTitle>
              <Tech>
                <TechIcon><MdRssFeed size={34} color="#f26a00" /></TechIcon>
                <TechLink>RSS</TechLink>
              </Tech>
            </div>
            <div>
              <CatTitle>Operating systems</CatTitle>
              <Tech>
                <TechIcon>
                  <svg width="26" height="26" viewBox="0 0 26 26"><circle cx="13" cy="13" r="12.500" fill="#a23a8c" /><g fill="none" stroke="#fff" strokeWidth="1.500"><ellipse cx="13" cy="7.500" rx="2.500" ry="3.500" /><ellipse cx="13" cy="18.500" rx="2.500" ry="3.500" /><ellipse cx="7.500" cy="13" rx="3.500" ry="2.500" /><ellipse cx="18.500" cy="13" rx="3.500" ry="2.500" /></g><circle cx="13" cy="13" r="2" fill="#f5b31a" /></svg>
                </TechIcon>
                <TechLink>CentOS</TechLink>
              </Tech>
            </div>
            <div>
              <CatTitle>Web servers</CatTitle>
              <Tech>
                <TechIcon><FeatherIcon /></TechIcon>
                <TechLink $w={181}>Apache HTTP Server</TechLink><Version>2.4.6</Version>
              </Tech>
            </div>
            <div>
              <CatTitle>JavaScript libraries</CatTitle>
              <Tech>
                <TechIcon><JQuery /></TechIcon>
                <TechLink>jQuery</TechLink><Version>1.11.3</Version>
              </Tech>
              <Tech>
                <TechIcon><JQuery /></TechIcon>
                <TechLink>jQuery Migrate</TechLink>
              </Tech>
            </div>
          </CatGrid>
          <Wrong>Something wrong or missing?</Wrong>
        </PopBody>
        <Leads>
          <LeadsHead>
            <LeadsTitle>Generate sales leads</LeadsTitle>
            <ChevronUp size={22} color="#4608ad" strokeWidth={3} />
          </LeadsHead>
          <LeadsText>Find new prospects by the technologies they use. Reach out</LeadsText>
        </Leads>
      </Popup>
    </Screen>
  );
}
